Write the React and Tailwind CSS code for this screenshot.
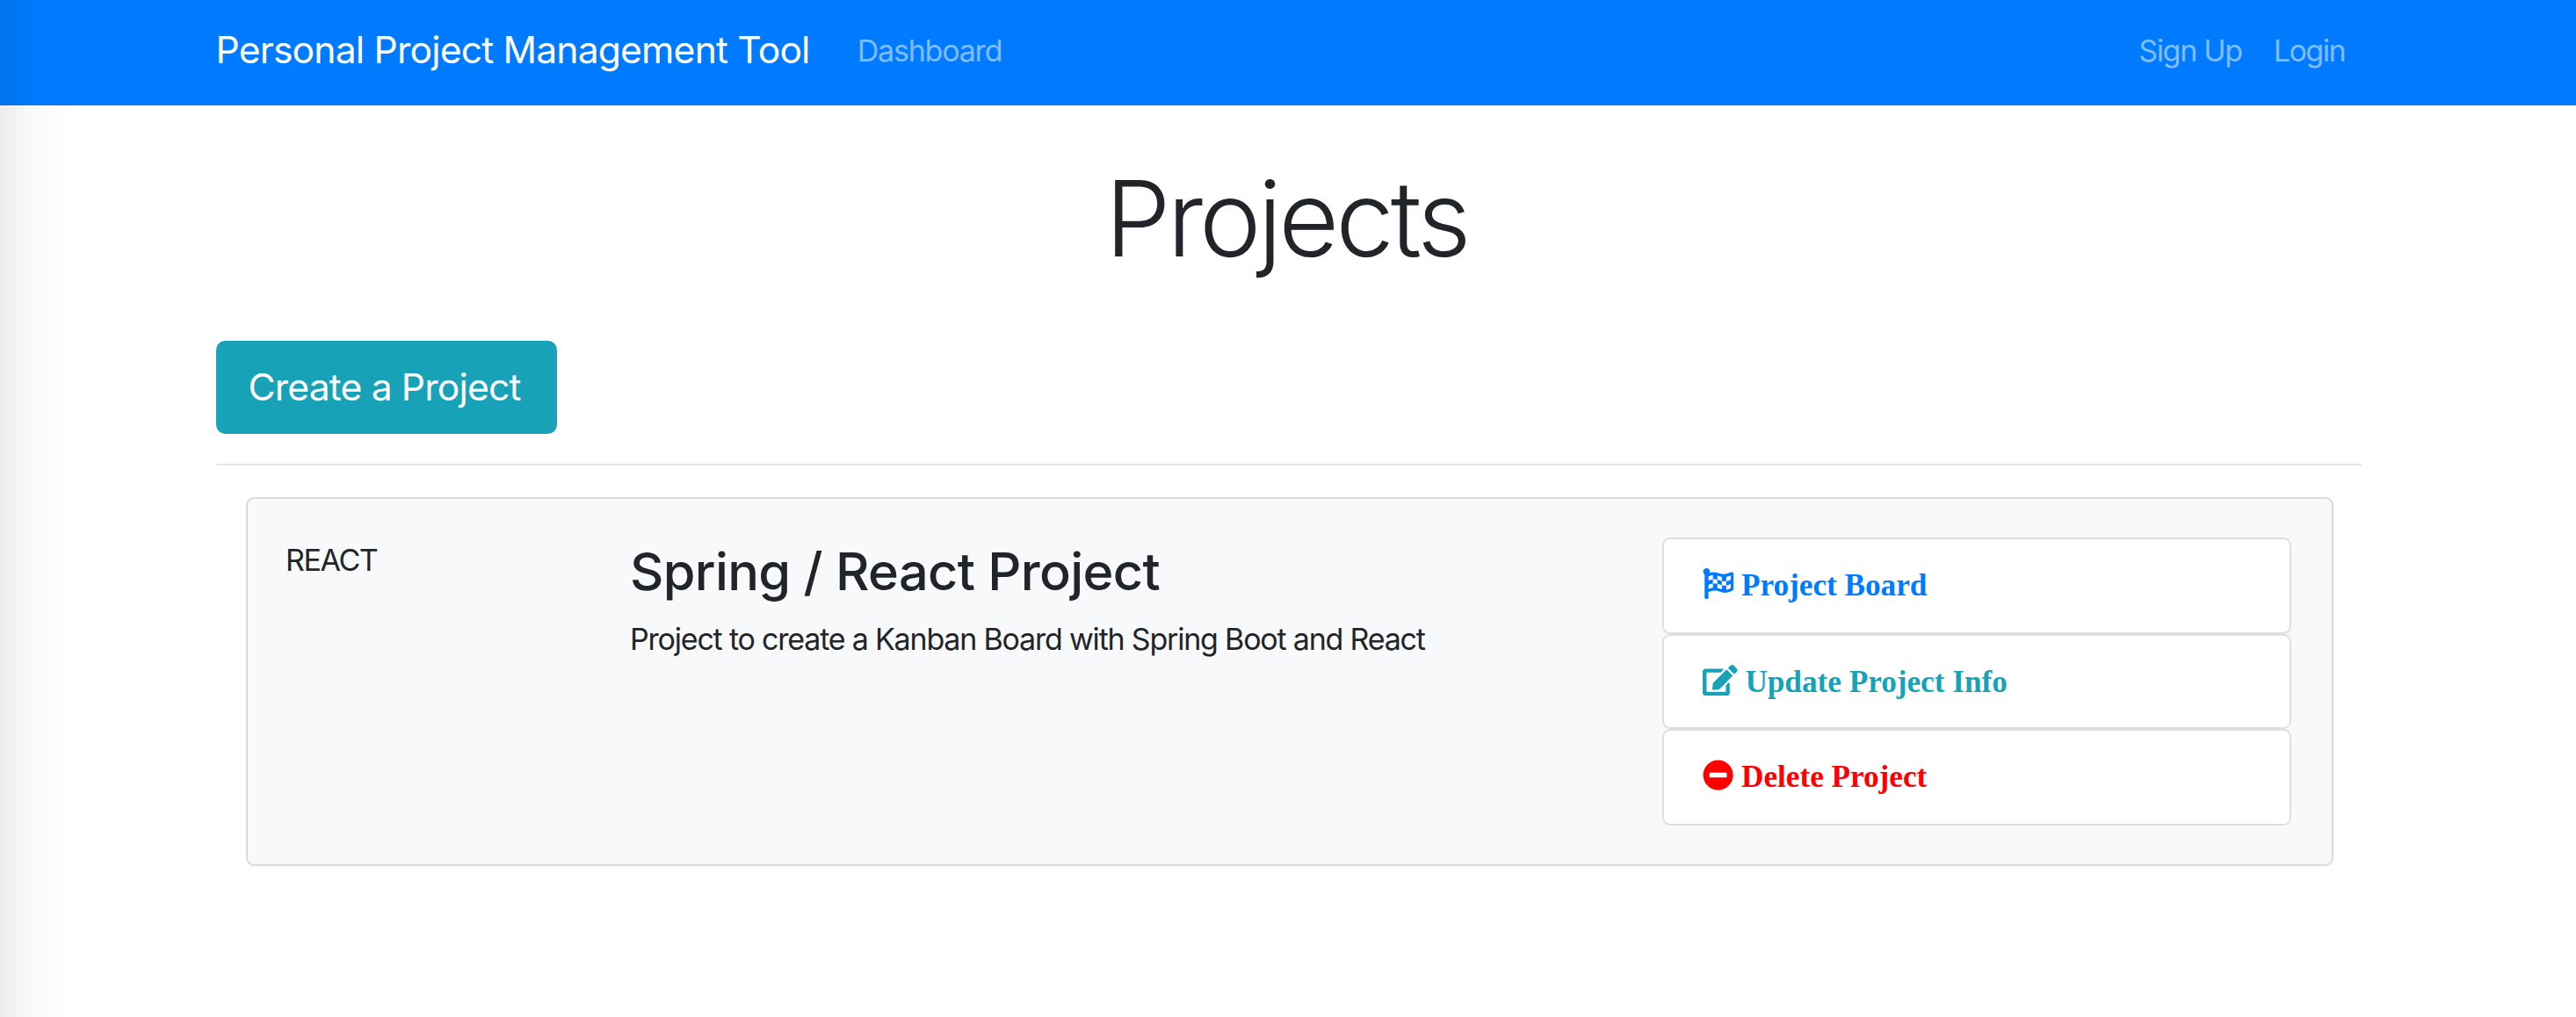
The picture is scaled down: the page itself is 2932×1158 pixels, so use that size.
import { FaEdit, FaFlagCheckered, FaMinusCircle } from "react-icons/fa";

const actions = [
  { label: "Project Board", Icon: FaFlagCheckered, row: "h-[110px] text-[#007bff]", icon: "h-[35.2px] w-[35.2px]" },
  { label: "Update Project Info", Icon: FaEdit, row: "h-[108px] text-[#17a2b8]", icon: "h-[35.2px] w-[39.6px]" },
  { label: "Delete Project", Icon: FaMinusCircle, row: "h-[110px] text-[#ff0000]", icon: "h-[35.2px] w-[35.2px]" },
];

function Navbar() {
  return (
    <nav className="flex h-[120px] items-start bg-[#007bff] pl-[245.5px] pr-[263px] text-[34px] leading-[52px] text-white/50">
      <a className="mt-[24px] whitespace-nowrap text-[42.6px] leading-[66px] tracking-[-0.806px] text-white">
        Personal Project Management Tool
      </a>
      <a className="ml-[54px] mt-[32px] tracking-[-1.19px]">Dashboard</a>
      <div className="ml-auto mt-[32px] flex gap-[36px]">
        <a className="tracking-[-1.3px]">Sign Up</a>
        <a className="tracking-[-1.5px]">Login</a>
      </div>
    </nav>
  );
}

function ProjectItem() {
  return (
    <section className="ml-[34px] mr-[32px] mt-[36px] flex h-[420px] rounded-[9px] border-2 border-[#d9dbdd] bg-[#f8f9fa] pl-[43px] pr-[46px] pt-[44px]">
      <div className="w-[392px] shrink-0 text-[34px] leading-[52px] tracking-[-1.4px]">REACT</div>
      <div className="w-[1175px] shrink-0">
        <h3 className="text-[59.5px] font-medium leading-[76px] tracking-[-0.7px]">Spring / React Project</h3>
        <p className="mt-[14px] text-[34px] leading-[52px] tracking-[-1.2px]">
          Project to create a Kanban Board with Spring Boot and React
        </p>
      </div>
      <ul className="w-[716px] shrink-0">
        {actions.map(({ label, Icon, row, icon }) => (
          <li
            key={label}
            className={`flex items-start gap-[8.8px] rounded-[9px] border-2 border-[#dfdfdf] bg-white pl-[44px] pt-[26px] font-['Liberation_Serif',serif] text-[35.2px] font-bold leading-[54px] ${row}`}
          >
            <Icon className={`mt-[7px] shrink-0 ${icon}`} />
            <span>{label}</span>
          </li>
        ))}
      </ul>
    </section>
  );
}

export default function App() {
  return (
    <div className="relative h-[1158px] w-[2932px] overflow-hidden bg-white font-[Inter,sans-serif] text-[#212529]">
      <Navbar />
      <main className="ml-[246px] w-[2442px]">
        <h1 className="pr-[6px] pt-[57px] text-center text-[119px] font-light leading-[144px] tracking-[-4.1px]">Projects</h1>
        <a className="mt-[67px] flex h-[106px] w-[388px] items-center rounded-[10.5px] bg-[#17a2b8] pl-[36.5px] text-[42.6px] leading-[66px] tracking-[-0.83px] text-white">
          Create a Project
        </a>
        <hr className="mt-[34px] border-t-2 border-[#e5e5e5]" />
        <ProjectItem />
      </main>
      <div className="pointer-events-none absolute inset-y-0 left-0 w-[84px] bg-[linear-gradient(to_right,rgba(0,0,0,0.075)_0px,rgba(0,0,0,0.05)_16px,rgba(0,0,0,0.025)_34px,rgba(0,0,0,0.01)_55px,rgba(0,0,0,0)_84px)]" />
    </div>
  );
}
